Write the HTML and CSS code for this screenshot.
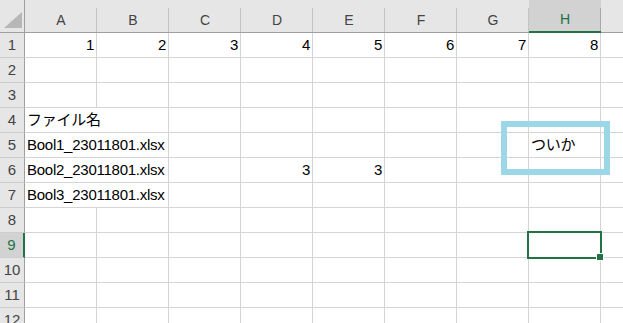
FILE: index.html
```html
<!DOCTYPE html>
<html lang="ja">

<head>
  <meta charset="UTF-8" />
  <meta name="viewport" content="width=device-width, initial-scale=1.0" />
  <title>Book1</title>
  <link rel="stylesheet" href="styles.css">
</head>

<body>
  <div class="sheet">
    <!-- 列見出し -->
    <div class="corner">
      <svg width="18" height="16" viewBox="0 0 18 16"><polygon points="18,0 18,16 0,16" fill="#b7b7b7" /></svg>
    </div>
    <div class="col">A</div>
    <div class="col">B</div>
    <div class="col">C</div>
    <div class="col">D</div>
    <div class="col">E</div>
    <div class="col">F</div>
    <div class="col">G</div>
    <div class="col on">H</div>
    <div class="col last"></div>

    <div class="row">1</div>
    <div class="cell num">1</div><div class="cell num">2</div><div class="cell num">3</div><div class="cell num">4</div>
    <div class="cell num">5</div><div class="cell num">6</div><div class="cell num">7</div><div class="cell num">8</div>
    <div class="cell last"></div>

    <div class="row">2</div>
    <div class="cell"></div><div class="cell"></div><div class="cell"></div><div class="cell"></div>
    <div class="cell"></div><div class="cell"></div><div class="cell"></div><div class="cell"></div>
    <div class="cell last"></div>

    <div class="row">3</div>
    <div class="cell"></div><div class="cell"></div><div class="cell"></div><div class="cell"></div>
    <div class="cell"></div><div class="cell"></div><div class="cell"></div><div class="cell"></div>
    <div class="cell last"></div>

    <div class="row">4</div>
    <div class="cell wide">ファイル名</div>
    <div class="cell"></div><div class="cell"></div><div class="cell"></div>
    <div class="cell"></div><div class="cell"></div><div class="cell"></div>
    <div class="cell last"></div>

    <div class="row">5</div>
    <div class="cell wide">Bool1_23011801.xlsx</div>
    <div class="cell"></div><div class="cell"></div><div class="cell"></div>
    <div class="cell"></div><div class="cell"></div><div class="cell">ついか</div>
    <div class="cell last"></div>

    <div class="row">6</div>
    <div class="cell wide">Bool2_23011801.xlsx</div>
    <div class="cell"></div><div class="cell num">3</div><div class="cell num">3</div>
    <div class="cell"></div><div class="cell"></div><div class="cell"></div>
    <div class="cell last"></div>

    <div class="row">7</div>
    <div class="cell wide">Bool3_23011801.xlsx</div>
    <div class="cell"></div><div class="cell"></div><div class="cell"></div>
    <div class="cell"></div><div class="cell"></div><div class="cell"></div>
    <div class="cell last"></div>

    <div class="row">8</div>
    <div class="cell"></div><div class="cell"></div><div class="cell"></div><div class="cell"></div>
    <div class="cell"></div><div class="cell"></div><div class="cell"></div><div class="cell"></div>
    <div class="cell last"></div>

    <div class="row on">9</div>
    <div class="cell"></div><div class="cell"></div><div class="cell"></div><div class="cell"></div>
    <div class="cell"></div><div class="cell"></div><div class="cell"></div><div class="cell sel"></div>
    <div class="cell last"></div>

    <div class="row">10</div>
    <div class="cell"></div><div class="cell"></div><div class="cell"></div><div class="cell"></div>
    <div class="cell"></div><div class="cell"></div><div class="cell"></div><div class="cell"></div>
    <div class="cell last"></div>

    <div class="row">11</div>
    <div class="cell"></div><div class="cell"></div><div class="cell"></div><div class="cell"></div>
    <div class="cell"></div><div class="cell"></div><div class="cell"></div><div class="cell"></div>
    <div class="cell last"></div>

    <div class="row">12</div>
    <div class="cell"></div><div class="cell"></div><div class="cell"></div><div class="cell"></div>
    <div class="cell"></div><div class="cell"></div><div class="cell"></div><div class="cell"></div>
    <div class="cell last"></div>

    <!-- 図形（四角） -->
    <div class="callout"></div>
  </div>
</body>

</html>
```

FILE: styles.css
```css
body {
  margin: 0;
  background: #fff;
  color: #000;
  font-family: "Liberation Sans", "Noto Sans CJK JP", sans-serif;
  overflow: hidden;
}

.sheet {
  position: relative;
  display: grid;
  grid-template-columns: 25px repeat(8, 72px) 1fr;
  grid-template-rows: 33px;
  grid-auto-rows: 25px;
  height: 323px;
  overflow: hidden;
}

.corner {
  background: #e6e6e6;
  border-right: 1px solid #9f9f9f;
  border-bottom: 1px solid #9f9f9f;

  svg {
    display: block;
    margin: 12px 0 0 4px;
  }
}

.col {
  padding-top: 8px;
  line-height: 24px;
  font-size: 14px;
  color: #444;
  text-align: center;
  background: linear-gradient(#c4c4c4, #c4c4c4) right bottom / 1px 24px no-repeat, #e6e6e6;
  border-bottom: 1px solid #9f9f9f;

  &.on {
    background: linear-gradient(#a8a8a8, #a8a8a8) right bottom / 1px 23px no-repeat, #d2d2d2;
    border-bottom: 2px solid #217346;
    line-height: 23px;
    color: #217346;
  }

  &.last {
    background: #e6e6e6;
  }
}

.row {
  background: #e6e6e6;
  border-right: 1px solid #9f9f9f;
  border-bottom: 1px solid #cdcdcd;
  font-size: 15px;
  line-height: 24px;
  color: #444;
  text-align: center;

  &.on {
    background: #d2d2d2;
    border-right: 2px solid #217346;
    color: #217346;
  }
}

.cell {
  border-right: 1px solid #d4d4d4;
  border-bottom: 1px solid #d4d4d4;
  padding: 0 2px;
  font-size: 15px;
  line-height: 24px;
  letter-spacing: -0.25px;
  white-space: nowrap;

  &.num {
    text-align: right;
  }

  &.wide {
    grid-column: span 2;
  }

  &.last {
    border-right: 0;
  }

  &.sel {
    position: relative;
  }

  /* 選択枠とフィルハンドル */
  &.sel::after {
    content: "";
    position: absolute;
    left: -2px;
    top: -2px;
    width: 75px;
    height: 28px;
    box-sizing: border-box;
    border: 2px solid #217346;
  }

  &.sel::before {
    content: "";
    position: absolute;
    left: 67px;
    top: 20px;
    width: 6px;
    height: 6px;
    background: #217346;
    border: 1px solid #fff;
    z-index: 1;
  }
}

.callout {
  position: absolute;
  left: 501px;
  top: 121px;
  width: 109px;
  height: 54px;
  box-sizing: border-box;
  border: 6px solid #9cd7e8;
}
```
